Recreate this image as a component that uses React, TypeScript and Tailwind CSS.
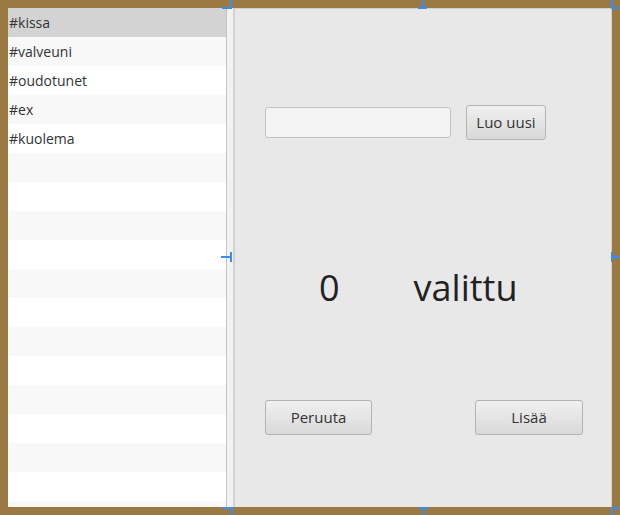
import React from 'react';

const tags = ['#kissa', '#valveuni', '#oudotunet', '#ex', '#kuolema'];
const rowCount = 18;

const font = { fontFamily: '"Open Sans", "Noto Sans", sans-serif' };

// selection handles drawn by the editor around the split pane
const handles: [number, number, number, number][] = [
  [222, 7, 9, 2], [230, 0, 2, 9],
  [418, 7, 9, 2], [422, 0, 2, 9],
  [611, 0, 2, 9], [611, 7, 9, 2],
  [221, 256, 9, 2], [230, 252, 2, 10],
  [611, 252, 2, 10], [611, 256, 9, 2],
  [222, 507, 9, 2], [231, 507, 2, 8],
  [419, 507, 9, 2], [423, 507, 2, 8],
  [611, 507, 9, 2], [611, 507, 2, 8],
];

const FxButton = ({ label, className }: { label: string; className: string }) => (
  <button
    className={`rounded-[3px] border border-[#b4b4b4] bg-gradient-to-b from-[#f0f0f0] to-[#d9d9d9] text-[15px] text-[#333] ${className}`}
  >
    {label}
  </button>
);

export default function App() {
  return (
    <div className="relative w-[620px] h-[515px] bg-[#9a7a42] p-2" style={font}>
      <div className="flex h-full">
        <div className="w-[219px] bg-white border-r border-[#c4c4c4] overflow-hidden">
          {Array.from({ length: rowCount }).map((_, i) => (
            <div
              key={i}
              className={`h-[29px] pl-px text-[14px] leading-[29px] text-[#333] ${
                i === 0 ? 'bg-[#d3d3d3]' : i % 2 === 1 ? 'bg-[#f8f8f8]' : 'bg-white'
              }`}
            >
              {tags[i] ?? ''}
            </div>
          ))}
        </div>
        <div className="w-[8px] bg-[#f2f2f2] border-r-2 border-[#d2d2d2]" />
        <div className="flex-1 flex flex-col bg-[#e8e8e8] border-t border-r border-[#d0d0d0] pl-[30px] pr-[28px]">
          <div className="flex items-center gap-[15px] mt-[96px]">
            <div className="w-[186px] h-[31px] rounded-[3px] border border-[#c4c4c4] bg-[#f3f3f3]" />
            <FxButton label="Luo uusi" className="w-[80px] h-[35px]" />
          </div>
          <div className="flex items-center mt-[126px] h-[44px] text-[36px] text-[#222]">
            <span className="ml-[54px] leading-none">0</span>
            <span className="ml-[74px] leading-none">valittu</span>
          </div>
          <div className="flex justify-between mt-[90px]">
            <FxButton label="Peruuta" className="w-[107px] h-[35px]" />
            <FxButton label="Lisää" className="w-[108px] h-[35px]" />
          </div>
        </div>
      </div>
      <svg className="absolute inset-0 pointer-events-none" width="620" height="515">
        {handles.map(([x, y, w, h], i) => (
          <rect key={i} x={x} y={y} width={w} height={h} fill="#3b8cf0" />
        ))}
      </svg>
    </div>
  );
}
